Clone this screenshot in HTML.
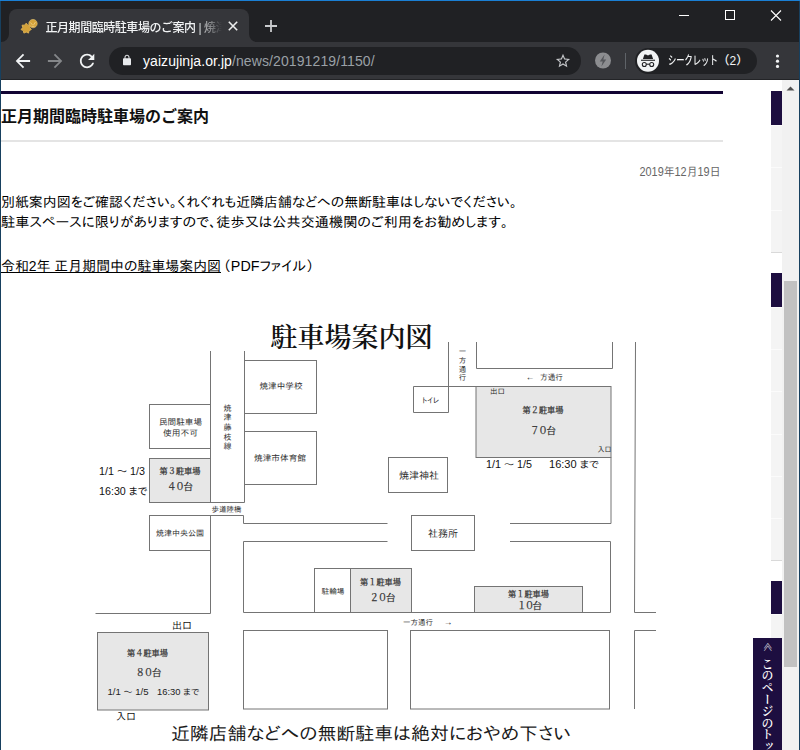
<!DOCTYPE html>
<html lang="ja">
<head>
<meta charset="utf-8">
<title>正月期間臨時駐車場のご案内 | 焼津神社</title>
<style>
html,body{margin:0;padding:0;}
body{width:800px;height:750px;overflow:hidden;position:relative;background:#fff;
  font-family:"Liberation Sans","Noto Sans CJK JP",sans-serif;}
.abs{position:absolute;}
/* ---------- browser chrome ---------- */
#frame{left:0;top:0;width:800px;height:80px;background:#202124;}
#topline{left:0;top:0;width:800px;height:1px;background:#1a7fd4;}
#lborder{left:0;top:1px;width:1px;height:749px;background:#17405f;}
#rborder{left:799px;top:1px;width:1px;height:749px;background:#17405f;}
#tab{left:9px;top:9px;width:240px;height:33px;background:#35363a;border-radius:8px 8px 0 0;}
#tabtitle{left:45.500px;top:18.500px;font-weight:500;width:178px;height:18px;line-height:18px;font-size:12px;letter-spacing:-0.450px;color:#f1f3f4;
  white-space:nowrap;overflow:hidden;
  -webkit-mask-image:linear-gradient(to right,#000 150px,transparent 176px);
  mask-image:linear-gradient(to right,#000 150px,transparent 176px);}
#toolbar{left:1px;top:42px;width:798px;height:37px;background:#35363a;}
#toolline{left:1px;top:79px;width:798px;height:1px;background:#232427;}
#omni{left:109px;top:47px;width:472px;height:28px;border-radius:14px;background:#202124;}
#url{left:143px;top:52px;height:18px;line-height:18px;font-size:14px;color:#fff;white-space:nowrap;letter-spacing:0.060px;}
#url span{color:#9aa0a6;letter-spacing:0.110px;}
#incog{left:635px;top:48px;width:122px;height:26px;border-radius:13px;background:#202124;}
#incogtxt{left:667.500px;top:52px;height:18px;line-height:18px;font-size:12px;color:#f1f3f4;white-space:nowrap;font-weight:500;}
#incogtxt span{position:absolute;left:0;top:0;transform-origin:0 50%;transform:scaleX(0.69);}
#incogtxt b{position:absolute;left:50px;top:0;font-weight:500;}
#sep{left:625px;top:53px;width:1px;height:16px;background:#5f6368;}
/* ---------- page ---------- */
#page{left:1px;top:80px;width:781px;height:670px;background:#fff;overflow:hidden;
  font-family:"Liberation Sans","IPAGothic","Noto Sans CJK JP",sans-serif;color:#000;}
#hline{left:0;top:11px;width:721.500px;height:3px;background:#120433;}
#h1{left:0;top:26px;font-size:16px;font-weight:bold;line-height:22px;white-space:nowrap;color:#111;
  font-family:"Liberation Sans","Noto Sans CJK JP",sans-serif;}
#gline{left:0;top:60px;width:721.500px;height:2px;background:#e4e4e4;}
#date{right:60px;top:84px;font-size:12px;line-height:16px;color:#666;white-space:nowrap;}
.p{left:0;font-size:14px;line-height:20px;white-space:nowrap;}
#side .nv{left:771px;width:11px;background:#1d0e40;}
#side .gy{left:771px;width:11px;background:#f4f4f4;}
#side .wl{left:771px;width:11px;height:1px;background:#fbfbfb;}
#side .dl{left:771px;width:11px;height:1px;background:#d9d9d9;}
#totop{left:753px;top:638px;width:29px;height:112px;background:#1d0e40;color:#fff;overflow:hidden;
  font-family:"Liberation Serif","Noto Serif CJK JP","Noto Serif CJK SC",serif;}
#totop span{position:absolute;writing-mode:vertical-rl;white-space:nowrap;}
#totop .chev{left:8.500px;top:3.500px;width:10px;font-size:10px;line-height:10px;}
#totop .lbl{font-weight:600;left:7px;top:20.300px;width:12px;font-size:12px;line-height:12px;letter-spacing:-0.200px;}
/* scrollbar */
#sb{left:782px;top:80px;width:17px;height:670px;background:#f1f1f1;}
#thumb{left:784px;top:281px;width:13px;height:386px;background:#c1c1c1;}
</style>
</head>
<body>
<div id="frame" class="abs"></div>
<div id="tab" class="abs"></div>
<div id="tabtitle" class="abs">正月期間臨時駐車場のご案内 | 焼津神社</div>
<div id="toolbar" class="abs"></div>
<div id="toolline" class="abs"></div>
<div id="omni" class="abs"></div>
<div id="url" class="abs">yaizujinja.or.jp<span>/news/20191219/1150/</span></div>
<div id="sep" class="abs"></div>
<div id="incog" class="abs"></div>
<div id="incogtxt" class="abs"><span>シークレット</span><b>（2）</b></div>
<svg id="icons" class="abs" style="left:0;top:0" width="800" height="80" viewBox="0 0 800 80">
  <path d="M1 42H9V34A8 8 0 0 1 1 42ZM257 42H249V34A8 8 0 0 0 257 42Z" fill="#35363a"/>
  <!-- favicon -->
  <circle cx="33" cy="23.600" r="4.200" fill="#d4a23a" stroke="#e9c873" stroke-width="0.600"/>
  <path d="M26.2 23.2L27.8 25.2L30.3 25.2L29.7 27.6L31.3 29.6L29.0 30.6L28.5 33.1L26.2 32.0L23.9 33.1L23.4 30.6L21.1 29.6L22.7 27.6L22.1 25.2L24.6 25.2Z" fill="#d4a23a" stroke="#ddb050" stroke-width="1" stroke-linejoin="round"/>
  <path d="M30.500 22.500l2 2.500M35.500 22l-2 3M31.500 26.300h3" stroke="#ecd08a" stroke-width="0.800" fill="none"/>
  <!-- tab close / new tab -->
  <path d="M228.800 21.800l8.400 8.400M237.200 21.800l-8.400 8.400" stroke="#eceded" stroke-width="1.600" fill="none"/>
  <path d="M265 26h12M271 20v12" stroke="#c9cbce" stroke-width="1.800" fill="none"/>
  <!-- window controls -->
  <path d="M679 15.500h10" stroke="#fff" stroke-width="1" fill="none"/>
  <rect x="725.500" y="10.500" width="9" height="9" stroke="#fff" stroke-width="1" fill="none"/>
  <path d="M771 10.500l10 10M781 10.500l-10 10" stroke="#fff" stroke-width="1.100" fill="none"/>
  <!-- nav -->
  <g transform="translate(12.100 50.200) scale(0.9)" fill="#f1f3f4"><path d="M20 11H7.830l5.590-5.590L12 4l-8 8 8 8 1.410-1.410L7.830 13H20v-2z"/></g>
  <g transform="translate(44.300 50.200) scale(0.9)" fill="#85878a"><path d="M12 4l-1.410 1.410L16.170 11H4v2h12.170l-5.580 5.590L12 20l8-8z"/></g>
  <g transform="translate(76.300 50.200) scale(0.9)" fill="#f1f3f4"><path d="M17.650 6.350C16.200 4.900 14.210 4 12 4c-4.420 0-7.990 3.580-7.990 8s3.570 8 7.990 8c3.730 0 6.840-2.550 7.730-6h-2.080c-.82 2.330-3.040 4-5.650 4-3.310 0-6-2.690-6-6s2.690-6 6-6c1.660 0 3.140.69 4.220 1.780L13 11h7V4l-2.350 2.350z"/></g>
  <!-- lock -->
  <g transform="translate(121 54.300) scale(0.5)" fill="#e8eaed"><path d="M18 8h-1V6c0-2.760-2.240-5-5-5S7 3.240 7 6v2H6c-1.100 0-2 .9-2 2v10c0 1.100.9 2 2 2h12c1.100 0 2-.9 2-2V10c0-1.100-.9-2-2-2zM9 6c0-1.660 1.340-3 3-3s3 1.340 3 3v2H9V6z"/></g>
  <!-- star -->
  <g transform="translate(554.500 52.400) scale(0.7083)" fill="#c4c6c9"><path d="M22 9.240l-7.190-.62L12 2 9.190 8.630 2 9.240l5.460 4.730L5.820 21 12 17.270 18.180 21l-1.630-7.030L22 9.240zM12 15.400l-3.760 2.270 1-4.280-3.320-2.880 4.380-.38L12 6.100l1.710 4.040 4.380.38-3.320 2.880 1 4.280L12 15.400z"/></g>
  <!-- amp bolt -->
  <circle cx="603" cy="60.500" r="8" fill="#8c8d90"/>
  <path d="M604.600 54.500l-4.800 7h2.900l-1.300 5 4.800-7h-2.900z" fill="#55575b"/>
  <!-- incognito -->
  <circle cx="648" cy="60.800" r="11" fill="#f1f3f4"/>
  <g fill="#202124">
    <path d="M644.400 54.600h1.600l2 .8 2-.8h1.600l1.500 4.300h-10.200z"/>
    <rect x="641" y="59.700" width="14" height="1.100"/>
  </g>
  <g fill="none" stroke="#202124" stroke-width="1.100">
    <circle cx="644.300" cy="64.500" r="2"/><circle cx="651.700" cy="64.500" r="2"/><path d="M646.300 64.200h3.400"/>
  </g>
  <!-- kebab -->
  <g fill="#f1f3f4"><circle cx="777.500" cy="56" r="1.600"/><circle cx="777.500" cy="61.200" r="1.600"/><circle cx="777.500" cy="66.400" r="1.600"/></g>
</svg>

<div id="page" class="abs">
  <div id="hline" class="abs"></div>
  <div id="h1" class="abs">正月期間臨時駐車場のご案内</div>
  <div id="gline" class="abs"></div>
  <svg id="pg" class="abs" style="left:-1px;top:0" width="782" height="670" viewBox="0 80 782 670">
    <g id="bodytext" font-family="'Liberation Sans','IPAPGothic','IPAGothic',sans-serif" font-size="14" fill="#000">
      <text x="639.500" y="175.700" font-size="12" fill="#666" textLength="81" lengthAdjust="spacingAndGlyphs">2019年12月19日</text>
      <text x="1" y="206.500" textLength="516" lengthAdjust="spacingAndGlyphs">別紙案内図をご確認ください。くれぐれも近隣店舗などへの無断駐車はしないでください。</text>
      <text x="1" y="226.500" textLength="507" lengthAdjust="spacingAndGlyphs">駐車スペースに限りがありますので、徒歩又は公共交通機関のご利用をお勧めします。</text>
      <text x="1" y="270.500" textLength="220" lengthAdjust="spacingAndGlyphs">令和2年 正月期間中の駐車場案内図</text>
      <text x="223" y="270.500" textLength="91" lengthAdjust="spacingAndGlyphs">（PDFファイル）</text>
      <rect x="1" y="272" width="220" height="1" fill="#000"/>
    </g>
    <g id="map">
      <g fill="#e7e7e7" stroke="#747474" stroke-width="1">
        <rect x="149.500" y="458.500" width="61" height="44"/>
        <rect x="476" y="386.500" width="135" height="71"/>
        <rect x="350.500" y="568.500" width="61" height="44"/>
        <rect x="474.500" y="586.500" width="108" height="26"/>
        <rect x="97.500" y="632.500" width="111" height="77.500"/>
      </g>
      <g fill="none" stroke="#747474" stroke-width="1">
        <path d="M210.500 351V502.500H244.500V351"/>
        <rect x="149.500" y="404.500" width="61" height="44"/>
        <rect x="244.500" y="360.500" width="72" height="53"/>
        <rect x="244.500" y="431.500" width="72" height="53"/>
        <rect x="149.500" y="515.500" width="61" height="35"/>
        <path d="M210.500 515.500H243.500V523.500H387.500"/>
        <path d="M210.500 550.500V613.500H95.500"/>
        <path d="M387.500 541.500H243.500V612.500H610.500V541.500H510"/>
        <rect x="314.500" y="568.500" width="36" height="44"/>
        <rect x="411.500" y="515.500" width="63" height="35"/>
        <rect x="388.500" y="457.500" width="59" height="35"/>
        <path d="M448.500 342V412.500H413.500V386.500H476"/>
        <path d="M476.500 342V368.500H612.500V342"/>
        <path d="M611 457.500V523.500H510"/>
        <path d="M635.500 342L634.500 612.500H656"/>
        <rect x="243.500" y="630.500" width="144" height="78.500"/>
        <rect x="410.500" y="630.500" width="199" height="78.500"/>
        <path d="M656 630.500H634.500V709"/>
      </g>
      <g font-family="'Liberation Serif','Noto Serif CJK JP','Noto Serif CJK SC',serif" fill="#111" text-anchor="middle">
        <text x="351.500" y="347" font-size="27" font-weight="600" textLength="162" lengthAdjust="spacingAndGlyphs">駐車場案内図</text>
        <g font-size="8.500" fill="#333" stroke="#333" stroke-width="0.250">
          <text x="180" y="473.500" textLength="41" lengthAdjust="spacingAndGlyphs">第３駐車場</text>
          <text x="180" y="489.500" font-size="9.500" textLength="26">４０台</text>
          <text x="543" y="413" textLength="41" lengthAdjust="spacingAndGlyphs">第２駐車場</text>
          <text x="543" y="434" font-size="9.500" textLength="26">７０台</text>
          <text x="380.500" y="585" textLength="41" lengthAdjust="spacingAndGlyphs">第１駐車場</text>
          <text x="382.500" y="601" font-size="9.500" textLength="26">２０台</text>
          <text x="528.500" y="597" textLength="41" lengthAdjust="spacingAndGlyphs">第１駐車場</text>
          <text x="529.500" y="609" font-size="9.500" textLength="25">１０台</text>
          <text x="147.500" y="656" textLength="41" lengthAdjust="spacingAndGlyphs">第４駐車場</text>
          <text x="148.500" y="676" font-size="9.500" textLength="26">８０台</text>
        </g>
      </g>
      <g font-family="'Liberation Sans','IPAPGothic','IPAGothic',sans-serif" fill="#2e2e2e" text-anchor="middle" font-size="8.500">
        <text x="180.500" y="425" textLength="43" lengthAdjust="spacingAndGlyphs">民間駐車場</text>
        <text x="180.500" y="435.500" textLength="35" lengthAdjust="spacingAndGlyphs">使用不可</text>
        <text x="281" y="389" textLength="43" lengthAdjust="spacingAndGlyphs">焼津中学校</text>
        <text x="280" y="461" textLength="52" lengthAdjust="spacingAndGlyphs">焼津市体育館</text>
        <text x="180" y="536" font-size="8" textLength="48" lengthAdjust="spacingAndGlyphs">焼津中央公園</text>
        <text x="419" y="479" font-size="10" textLength="40" lengthAdjust="spacingAndGlyphs">焼津神社</text>
        <text x="443" y="536.500" font-size="10" textLength="30" lengthAdjust="spacingAndGlyphs">社務所</text>
        <text x="430.500" y="403" font-size="7.500" textLength="17" lengthAdjust="spacingAndGlyphs">トイレ</text>
        <text x="333" y="593.500" font-size="7.500" textLength="23" lengthAdjust="spacingAndGlyphs">駐輪場</text>
        <text x="226.500" y="512" font-size="7.500" textLength="30" lengthAdjust="spacingAndGlyphs">歩道陸橋</text>
        <text x="227.500" y="410.500" font-size="8">焼</text>
        <text x="227.500" y="420.200" font-size="8">津</text>
        <text x="227.500" y="430" font-size="8">藤</text>
        <text x="227.500" y="439.700" font-size="8">枝</text>
        <text x="227.500" y="449.400" font-size="8">線</text>
        <text x="462.500" y="354.200" font-size="7.500">一</text>
        <text x="462.500" y="363" font-size="7.500">方</text>
        <text x="462.500" y="371.700" font-size="7.500">通</text>
        <text x="462.500" y="380.400" font-size="7.500">行</text>
        <text x="530" y="380" font-size="8.500">←</text><text x="551.500" y="380" font-size="8" textLength="23" lengthAdjust="spacingAndGlyphs">方通行</text>
        <text x="418" y="625" font-size="7.500" textLength="30" lengthAdjust="spacingAndGlyphs">一方通行</text><text x="448" y="625" font-size="8.500">→</text>
        <text x="497.500" y="394" font-size="7.500" textLength="15" lengthAdjust="spacingAndGlyphs">出口</text>
        <text x="604.500" y="451.500" font-size="7.500" textLength="14" lengthAdjust="spacingAndGlyphs">入口</text>
      </g>
      <g font-family="'Liberation Sans','IPAPGothic','IPAGothic',sans-serif" fill="#111">
        <text x="99" y="474.500" font-size="10.500" textLength="46" lengthAdjust="spacingAndGlyphs">1/1 ～ 1/3</text>
        <text x="99" y="494.500" font-size="10.500" textLength="48.500" lengthAdjust="spacingAndGlyphs">16:30 まで</text>
        <text x="486" y="468" font-size="10" textLength="46" lengthAdjust="spacingAndGlyphs">1/1 ～ 1/5</text>
        <text x="549" y="468" font-size="10" textLength="50" lengthAdjust="spacingAndGlyphs">16:30 まで</text>
        <text x="107.500" y="695" font-size="8.500" fill="#222" textLength="41" lengthAdjust="spacingAndGlyphs">1/1 ～ 1/5</text>
        <text x="157" y="695" font-size="8.500" fill="#222" textLength="42.500" lengthAdjust="spacingAndGlyphs">16:30 まで</text>
        <text x="172" y="629" font-size="10" textLength="20" lengthAdjust="spacingAndGlyphs">出口</text>
        <text x="116" y="719.500" font-size="10" textLength="20" lengthAdjust="spacingAndGlyphs">入口</text>
        <text x="171" y="739.500" font-size="18" fill="#1a1a1a" textLength="400" lengthAdjust="spacingAndGlyphs">近隣店舗などへの無断駐車は絶対におやめ下さい</text>
      </g>
    </g>
  </svg>
</div>
<div id="side" class="abs">
  <div class="abs nv" style="top:91px;height:34px"></div>
  <div class="abs gy" style="top:125px;height:127px"></div>
  <div class="abs wl" style="top:125px"></div><div class="abs wl" style="top:167px"></div><div class="abs wl" style="top:210px"></div>
  <div class="abs dl" style="top:252px"></div>
  <div class="abs nv" style="top:273px;height:34px"></div>
  <div class="abs gy" style="top:307px;height:253px"></div>
  <div class="abs wl" style="top:307px"></div><div class="abs wl" style="top:349px"></div><div class="abs wl" style="top:391px"></div><div class="abs wl" style="top:434px"></div><div class="abs wl" style="top:476px"></div><div class="abs wl" style="top:518px"></div>
  <div class="abs dl" style="top:560px"></div>
  <div class="abs nv" style="top:581px;height:33px"></div>
  <div class="abs gy" style="top:614px;height:136px"></div>
  <div class="abs wl" style="top:614px"></div>
</div>
<div id="totop" class="abs"><span class="chev">≪</span><span class="lbl">このページのトップへ</span></div>
<div id="sb" class="abs"></div>
<svg class="abs" style="left:782px;top:80px" width="17" height="17" viewBox="0 0 17 17"><path d="M4.500 10.500L8.500 6.500L12.500 10.500z" fill="#505050"/></svg>
<div id="thumb" class="abs"></div>
<div id="topline" class="abs"></div>
<div id="lborder" class="abs"></div>
<div id="rborder" class="abs"></div>
</body>
</html>
